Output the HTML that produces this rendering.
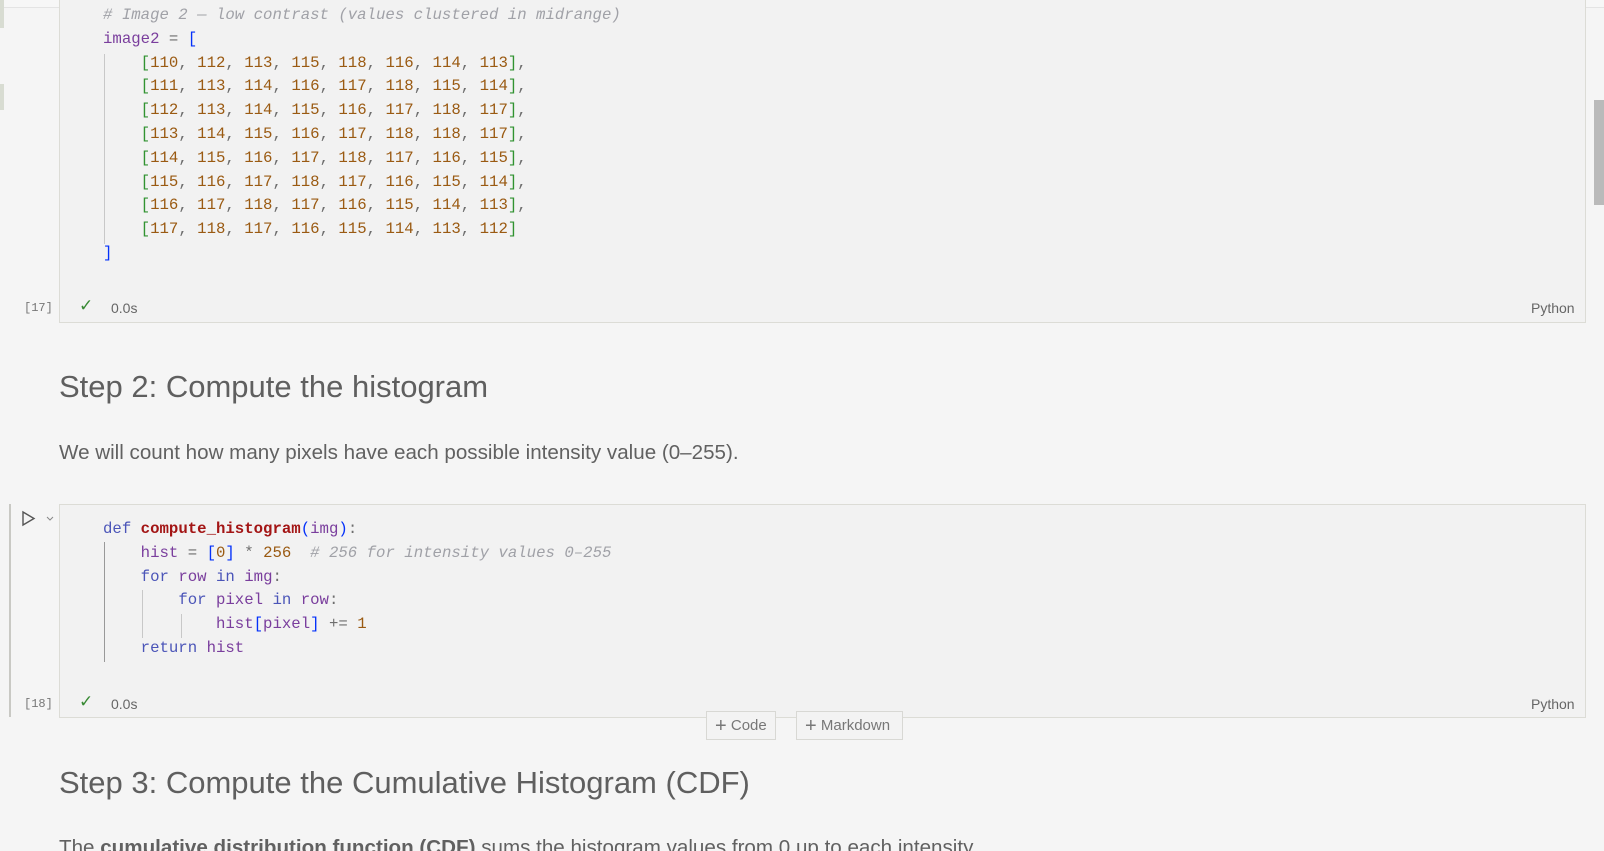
<!DOCTYPE html>
<html><head><meta charset="utf-8"><style>
html,body{margin:0;padding:0;width:1604px;height:851px;overflow:hidden;background:#f5f5f5;position:relative;font-family:"Liberation Sans",sans-serif}
.abs{position:absolute}
.cell{position:absolute;background:#f2f2f2;border:1px solid #dcdcd6;box-sizing:border-box}
.code{position:absolute;font-family:"Liberation Mono",monospace;font-size:15.7px;line-height:23.8px;white-space:pre;color:#6e6e6e}
.c{color:#a0a1a7;font-style:italic}
.v{color:#7a3e9d}.n{color:#9a5a12}.g{color:#319331}.b{color:#0431fa}.k{color:#4b55b8}.f{color:#a31515;font-weight:bold}.p{color:#555}
.ec{position:absolute;font-family:"Liberation Mono",monospace;font-size:12px;color:#777}
.chk{position:absolute;color:#388a34;font-size:17px}
.t{position:absolute;font-size:14px;color:#666}
h2{position:absolute;margin:0;font-weight:normal;font-size:31px;color:#5f5f5f;left:59px}
.para{position:absolute;left:59px;font-size:20.6px;color:#616161;white-space:nowrap}
.guide{position:absolute;width:1px;background:#c8c8c8}
.btn{position:absolute;border:1px solid #d8d8d4;background:#f3f3f3;box-sizing:border-box;font-size:15px;color:#777;line-height:28px;padding-left:8px}
</style></head><body>
<div class="abs" style="left:0;top:0;width:1604px;height:7px;background:#f7f7f7;border-bottom:1px solid #e4e4e4"></div>
<div class="abs" style="left:0;top:0;width:4px;height:28px;background:#d8dcd2"></div>
<div class="abs" style="left:0;top:84px;width:4px;height:26px;background:#d8dcd2"></div>
<div class="cell" style="left:59px;top:-5px;width:1527px;height:328px;border-top:none"></div>
<div class="code" style="left:103px;top:4px"><span class="c"># Image 2 — low contrast (values clustered in midrange)</span>
<span class="v">image2</span> = <span class="b">[</span>
    <span class="g">[</span><span class="n">110</span>, <span class="n">112</span>, <span class="n">113</span>, <span class="n">115</span>, <span class="n">118</span>, <span class="n">116</span>, <span class="n">114</span>, <span class="n">113</span><span class="g">]</span>,
    <span class="g">[</span><span class="n">111</span>, <span class="n">113</span>, <span class="n">114</span>, <span class="n">116</span>, <span class="n">117</span>, <span class="n">118</span>, <span class="n">115</span>, <span class="n">114</span><span class="g">]</span>,
    <span class="g">[</span><span class="n">112</span>, <span class="n">113</span>, <span class="n">114</span>, <span class="n">115</span>, <span class="n">116</span>, <span class="n">117</span>, <span class="n">118</span>, <span class="n">117</span><span class="g">]</span>,
    <span class="g">[</span><span class="n">113</span>, <span class="n">114</span>, <span class="n">115</span>, <span class="n">116</span>, <span class="n">117</span>, <span class="n">118</span>, <span class="n">118</span>, <span class="n">117</span><span class="g">]</span>,
    <span class="g">[</span><span class="n">114</span>, <span class="n">115</span>, <span class="n">116</span>, <span class="n">117</span>, <span class="n">118</span>, <span class="n">117</span>, <span class="n">116</span>, <span class="n">115</span><span class="g">]</span>,
    <span class="g">[</span><span class="n">115</span>, <span class="n">116</span>, <span class="n">117</span>, <span class="n">118</span>, <span class="n">117</span>, <span class="n">116</span>, <span class="n">115</span>, <span class="n">114</span><span class="g">]</span>,
    <span class="g">[</span><span class="n">116</span>, <span class="n">117</span>, <span class="n">118</span>, <span class="n">117</span>, <span class="n">116</span>, <span class="n">115</span>, <span class="n">114</span>, <span class="n">113</span><span class="g">]</span>,
    <span class="g">[</span><span class="n">117</span>, <span class="n">118</span>, <span class="n">117</span>, <span class="n">116</span>, <span class="n">115</span>, <span class="n">114</span>, <span class="n">113</span>, <span class="n">112</span><span class="g">]</span>
<span class="b">]</span></div>
<div class="guide" style="left:104px;top:54px;height:190px"></div>
<div class="ec" style="left:24px;top:301px">[17]</div>
<div class="chk" style="left:79px;top:296px">✓</div>
<div class="t" style="left:111px;top:300px">0.0s</div>
<div class="t" style="left:1531px;top:300px">Python</div>

<h2 style="top:369px">Step 2: Compute the histogram</h2>
<div class="para" style="top:441px">We will count how many pixels have each possible intensity value (0–255).</div>

<div class="abs" style="left:9px;top:504px;width:2px;height:213px;background:#c9c9c4"></div>
<svg class="abs" style="left:21px;top:510px" width="40" height="18"><path d="M2 2 L13 8.5 L2 15 Z" fill="none" stroke="#555" stroke-width="1.4"/><path d="M26 7 L29 10 L32 7" fill="none" stroke="#888" stroke-width="1"/></svg>
<div class="cell" style="left:59px;top:504px;width:1527px;height:214px"></div>
<div class="code" style="left:103px;top:518px"><span class="k">def</span> <span class="f">compute_histogram</span><span class="b">(</span><span class="v">img</span><span class="b">)</span>:
    <span class="v">hist</span> = <span class="b">[</span><span class="n">0</span><span class="b">]</span> * <span class="n">256</span>  <span class="c"># 256 for intensity values 0–255</span>
    <span class="k">for</span> <span class="v">row</span> <span class="k">in</span> <span class="v">img</span>:
        <span class="k">for</span> <span class="v">pixel</span> <span class="k">in</span> <span class="v">row</span>:
            <span class="v">hist</span><span class="b">[</span><span class="v">pixel</span><span class="b">]</span> += <span class="n">1</span>
    <span class="k">return</span> <span class="v">hist</span></div>
<div class="guide" style="left:104px;top:542px;height:120px;background:#999"></div>
<div class="guide" style="left:142px;top:590px;height:48px"></div>
<div class="guide" style="left:181px;top:614px;height:24px"></div>
<div class="ec" style="left:24px;top:697px">[18]</div>
<div class="chk" style="left:79px;top:692px">✓</div>
<div class="t" style="left:111px;top:696px">0.0s</div>
<div class="t" style="left:1531px;top:696px">Python</div>

<div class="btn" style="left:706px;top:711px;width:70px;height:29px"><span style="font-size:20px;vertical-align:-2px">+</span> Code</div>
<div class="btn" style="left:796px;top:711px;width:107px;height:29px"><span style="font-size:20px;vertical-align:-2px">+</span> Markdown</div>

<h2 style="top:765px">Step 3: Compute the Cumulative Histogram (CDF)</h2>
<div class="para" style="top:836px">The <b>cumulative distribution function (CDF)</b> sums the histogram values from 0 up to each intensity.</div>

<div class="abs" style="left:1594px;top:100px;width:10px;height:105px;background:#bababa"></div>
</body></html>
